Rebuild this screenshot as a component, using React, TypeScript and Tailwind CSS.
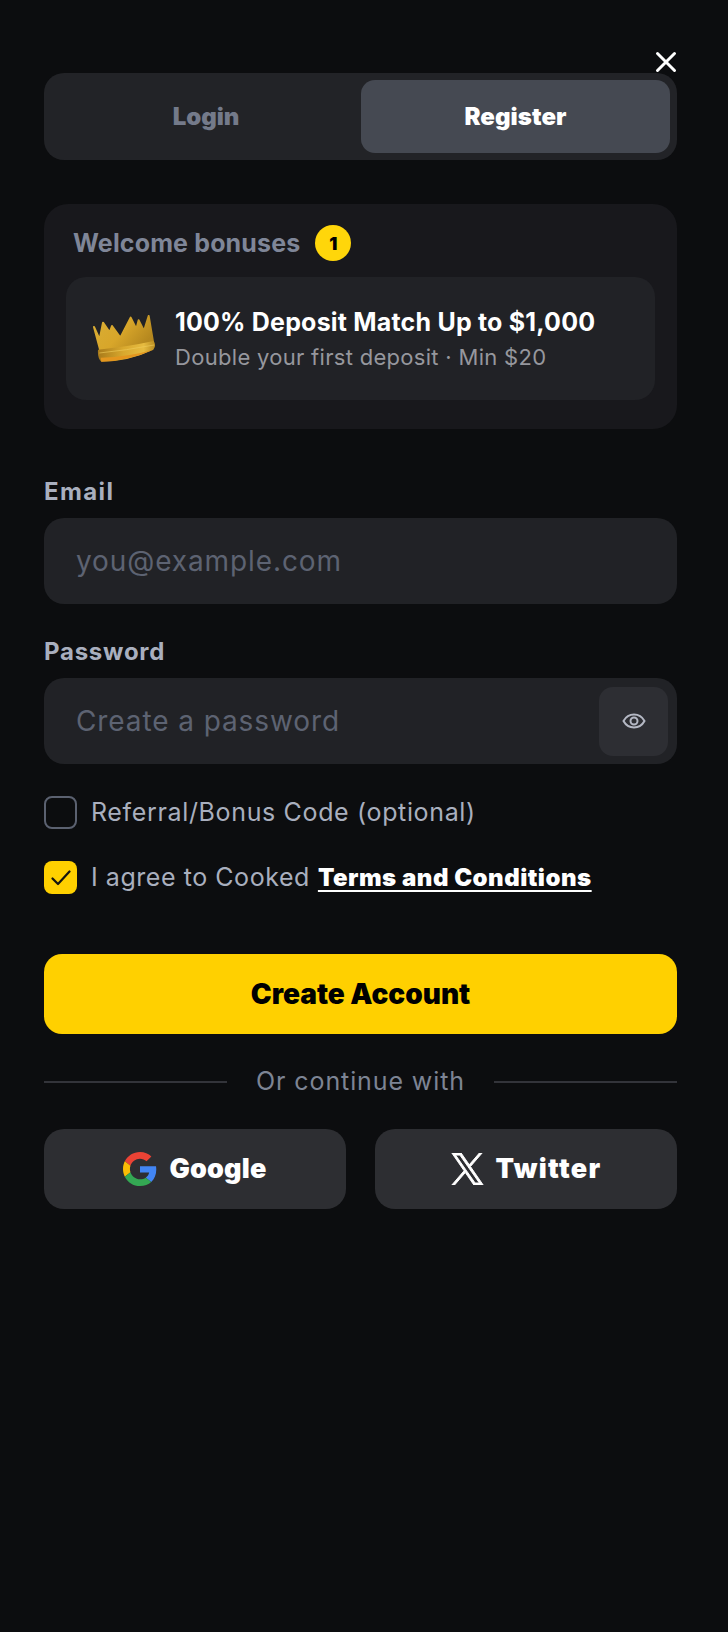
import React from "react";

const font = { fontFamily: '"Inter", "Liberation Sans", sans-serif' };

function Crown() {
  return (
    <svg width="64" height="48" viewBox="22 32 192 144" className="shrink-0">
      <defs>
        <linearGradient id="c1" x1="0" y1="0" x2="1" y2="0.5">
          <stop offset="0" stopColor="#d9ae35" />
          <stop offset="0.55" stopColor="#d8a62a" />
          <stop offset="1" stopColor="#b5881f" />
        </linearGradient>
        <linearGradient id="c2" x1="0" y1="0" x2="1" y2="0">
          <stop offset="0" stopColor="#a87a1a" />
          <stop offset="0.45" stopColor="#d9a92e" />
          <stop offset="0.8" stopColor="#e6bb40" />
          <stop offset="1" stopColor="#b88c20" />
        </linearGradient>
      </defs>
      <path
        d="M28 68 L45 105 L55 55 L75 84 L82 65 L107 100 L138 40 L155 74 L162 48 L178 80 L192 35 L205 112 L48 142 Z"
        fill="url(#c1)"
        stroke="url(#c1)"
        strokeWidth="6"
        strokeLinejoin="round"
      />
      <path d="M40 136 Q125 128 207 110 Q216 124 206 136 Q130 172 50 172 Q38 162 40 136 Z" fill="url(#c2)" />
      <path d="M50 172 Q130 170 206 136 Q130 158 48 160 Z" fill="#e3961f" />
      <path d="M44 146 Q125 138 208 122" fill="none" stroke="#f0cd5c" strokeWidth="3" opacity="0.6" />
    </svg>
  );
}

function GoogleIcon() {
  return (
    <svg width="34" height="34" viewBox="0 0 48 48">
      <path fill="#EA4335" d="M24 9.5c3.54 0 6.71 1.22 9.21 3.6l6.85-6.85C35.9 2.38 30.47 0 24 0 14.62 0 6.51 5.38 2.56 13.22l7.98 6.19C12.43 13.72 17.74 9.5 24 9.5z" />
      <path fill="#4285F4" d="M46.98 24.55c0-1.57-.15-3.09-.38-4.55H24v9.02h12.94c-.58 2.96-2.26 5.48-4.78 7.18l7.73 6c4.51-4.18 7.09-10.36 7.09-17.65z" />
      <path fill="#FBBC05" d="M10.53 28.59c-.48-1.45-.76-2.99-.76-4.59s.27-3.14.76-4.59l-7.98-6.19C.92 16.46 0 20.12 0 24c0 3.88.92 7.54 2.56 10.78l7.97-6.19z" />
      <path fill="#34A853" d="M24 48c6.48 0 11.93-2.13 15.89-5.81l-7.73-6c-2.15 1.45-4.92 2.3-8.16 2.3-6.26 0-11.57-4.22-13.47-9.91l-7.98 6.19C6.51 42.62 14.62 48 24 48z" />
    </svg>
  );
}

function XIcon() {
  return (
    <svg width="33" height="32" viewBox="0 0 1200 1227" fill="#fff" stroke="#fff" strokeWidth="36">
      <path d="M714.163 519.284 1160.89 0H1055.03L667.137 450.887 357.328 0H0l468.492 681.821L0 1226.37h105.866l409.625-476.152 327.181 476.152H1200L714.137 519.284h.026ZM569.165 687.828l-47.468-67.894-377.686-540.24h162.604l304.797 435.991 47.468 67.894 396.2 566.721H892.476L569.165 687.854v-.026Z" />
    </svg>
  );
}

export default function App() {
  return (
    <div className="relative min-h-[1632px] w-[728px] bg-[#0c0d0f] pl-[44px] pr-[51px] pt-[73px]" style={font}>
      <svg className="absolute left-[655px] top-[51px]" width="22" height="22" viewBox="0 0 22 22" fill="none" stroke="#fff" strokeWidth="3" strokeLinecap="round">
        <path d="M2.500 2.500 L19.500 19.500 M19.500 2.500 L2.500 19.500" />
      </svg>

      <div className="flex h-[87px] rounded-[20px] bg-[#222327] p-[7px]">
        <div className="flex flex-1 items-center justify-center text-[24px] font-black tracking-[-0.1px] text-[#747a8a]">Login</div>
        <div className="flex w-[309px] items-center justify-center rounded-[14px] bg-[#454952] text-[24px] font-black tracking-[0.1px] text-white">Register</div>
      </div>

      <div className="mt-[44px] h-[225px] rounded-[24px] bg-[#18181c] px-[22px] pt-[21px]">
        <div className="flex h-[36px] items-center pl-[7px]">
          <span className="relative top-[1px] text-[25px] font-bold tracking-[0.15px] text-[#7f8698]">Welcome bonuses</span>
          <span className="ml-[15px] flex h-[36px] w-[36px] items-center justify-center rounded-full bg-[#ffd60a] text-[18px] font-black text-black">1</span>
        </div>
        <div className="mt-[16px] flex h-[123px] items-center rounded-[20px] bg-[#212226] pl-[26px]">
          <Crown />
          <div className="ml-[19px]">
            <div className="text-[25px] font-bold leading-[32px] tracking-[0.2px] text-white">100% Deposit Match Up to $1,000</div>
            <div className="mt-[5px] text-[22px] leading-[28px] tracking-[0.3px] text-[#96979d]">Double your first deposit · Min $20</div>
          </div>
        </div>
      </div>

      <div className="mt-[47px] text-[24px] font-bold leading-[32px] tracking-[1.400px] text-[#a9afbe]">Email</div>
      <div className="mt-[10px] flex h-[86px] items-center rounded-[20px] bg-[#212226] pl-[32px] text-[28px] tracking-[0.9px] text-[#5d6372]">you@example.com</div>

      <div className="mt-[32px] text-[24px] font-bold leading-[32px] tracking-[0.75px] text-[#a9afbe]">Password</div>
      <div className="mt-[10px] flex h-[86px] items-center justify-between rounded-[20px] bg-[#212226] pl-[32px] pr-[9px] text-[28px] tracking-[0.9px] text-[#5d6372]">
        <span>Create a password</span>
        <span className="flex h-[69px] w-[69px] items-center justify-center rounded-[14px] bg-[#2d2e33]">
          <svg width="24" height="24" viewBox="0 0 24 24" fill="none" stroke="#b4b8c4" strokeWidth="2">
            <path d="M1.500 12C4 7.500 7.500 5.500 12 5.500S20 7.500 22.500 12C20 16.500 16.500 18.500 12 18.500S4 16.500 1.500 12Z" />
            <circle cx="12" cy="12" r="3.500" />
          </svg>
        </span>
      </div>

      <div className="mt-[32px] flex h-[33px] items-center">
        <span className="h-[33px] w-[33px] rounded-[8px] border-2 border-[#5b6170]" />
        <span className="ml-[14px] text-[25px] tracking-[0.65px] text-[#a9afbe]">Referral/Bonus Code (optional)</span>
      </div>

      <div className="mt-[32px] flex h-[33px] items-center">
        <span className="flex h-[33px] w-[33px] items-center justify-center rounded-[8px] bg-[#ffd000]">
          <svg width="20" height="20" viewBox="0 0 20 20" fill="none" stroke="#14140f" strokeWidth="2.200" strokeLinecap="round" strokeLinejoin="round">
            <path d="M1.500 10.500 L7 16 L18.500 3.500" />
          </svg>
        </span>
        <span className="ml-[14px] text-[25px] tracking-[0.55px] text-[#a9afbe]">I agree to Cooked</span>
        <span className="ml-[8px] text-[24px] font-black tracking-[0.5px] text-white underline decoration-2 underline-offset-4">Terms and Conditions</span>
      </div>

      <div className="mt-[60px] flex h-[80px] items-center justify-center rounded-[18px] bg-[#ffd000] text-[28px] font-black text-black">Create Account</div>

      <div className="mt-[31px] flex h-[34px] items-center justify-between">
        <span className="h-[2px] w-[183px] bg-[#33343a]" />
        <span className="text-[25px] tracking-[0.9px] text-[#7d8494]">Or continue with</span>
        <span className="h-[2px] w-[183px] bg-[#33343a]" />
      </div>

      <div className="mt-[30px] flex gap-[29px]">
        <div className="flex h-[80px] flex-1 items-center justify-center gap-[12px] rounded-[20px] bg-[#2d2e32] text-[27px] font-black tracking-[0.2px] text-white">
          <GoogleIcon />
          Google
        </div>
        <div className="flex h-[80px] flex-1 items-center justify-center gap-[12px] rounded-[20px] bg-[#2d2e32] text-[27px] font-black tracking-[1.300px] text-white">
          <XIcon />
          Twitter
        </div>
      </div>
    </div>
  );
}
